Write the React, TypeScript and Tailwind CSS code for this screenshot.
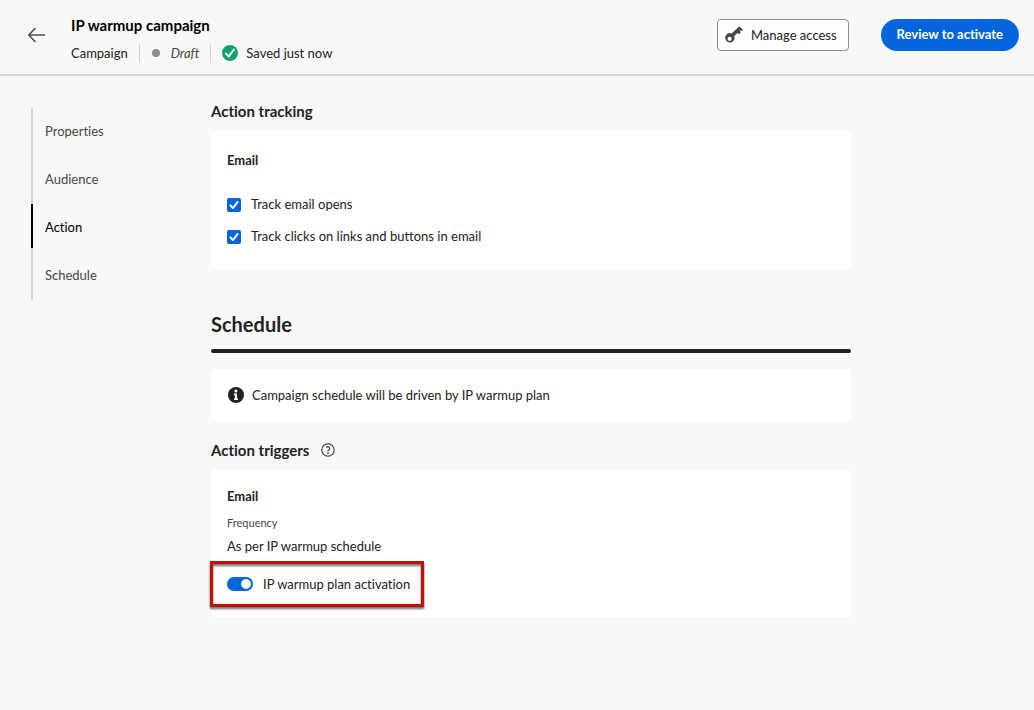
import { useState, type ReactNode } from 'react';

const steps = ['Properties', 'Audience', 'Action', 'Schedule'];

function BackIcon() {
  return (
    <svg viewBox="0 0 18 16" className="h-4 w-[18px]" fill="none" stroke="#4b4b4b" strokeWidth="1.5" strokeLinecap="round" strokeLinejoin="round" aria-hidden="true">
      <path d="M16.500 8H.9M7 1.600L.8 8 7 14.400" />
    </svg>
  );
}

function KeyIcon() {
  return (
    <svg viewBox="0 0 18 18" className="size-[18px]" aria-hidden="true">
      <path
        fill="#464646"
        fillRule="evenodd"
        d="M13.600 .9a1 1 0 0 1 1.400 0l2.600 2.600a.8.8 0 0 1 0 1.100l-.6.6-1.200-1.100-1 1 1.100 1.100-1.500 1.500a.8.8 0 0 1-1.100 0l-.9-.8-3.200 3.100a4.700 4.700 0 1 1-2.600-2.600zM4.600 10.700a2.100 2.100 0 1 0 0 4.200 2.100 2.100 0 0 0 0-4.200z"
      />
    </svg>
  );
}

function SavedIcon() {
  return (
    <svg viewBox="0 0 16 16" className="size-4" aria-hidden="true">
      <circle cx="8" cy="8" r="8" fill="#12a26c" />
      <path d="M3.8 8.4l2.9 3.1 5.3-7" fill="none" stroke="#fff" strokeWidth="1.9" strokeLinecap="round" strokeLinejoin="round" />
    </svg>
  );
}

function InfoIcon() {
  return (
    <svg viewBox="0 0 16 16" className="size-4" aria-hidden="true">
      <circle cx="8" cy="8" r="8" fill="#222" />
      <circle cx="7.9" cy="4" r="1.5" fill="#fff" />
      <path d="M6 6.6h3v4.6h1V13H6v-1.8h1V8.4H6z" fill="#fff" />
    </svg>
  );
}

function HelpIcon() {
  return (
    <svg viewBox="0 0 14 14" className="size-3.5" fill="none" stroke="#464646" aria-hidden="true">
      <circle cx="7" cy="7" r="6.2" strokeWidth="1.2" />
      <path d="M5.2 4.3c1.7-1 3.6-.5 3.6 1 0 1.300-1.800 1.500-1.800 2.900" strokeWidth="1.3" />
      <circle cx="7" cy="10.200" r=".9" fill="#464646" stroke="none" />
    </svg>
  );
}

function Card({ children, className }: { children: ReactNode; className: string }) {
  return <div className={`rounded bg-white px-4 ${className}`}>{children}</div>;
}

function TrackOption({ id, label }: { id: string; label: string }) {
  const [checked, setChecked] = useState(true);
  return (
    <div className="flex h-8 items-center gap-2.5">
      <span className="relative flex size-3.5">
        <input
          id={id}
          type="checkbox"
          checked={checked}
          onChange={(e) => setChecked(e.target.checked)}
          className="size-3.5 appearance-none rounded-xs border-2 border-[#6e6e6e] bg-white checked:border-[#0265dc] checked:bg-[#0265dc]"
        />
        {checked && (
          <svg viewBox="0 0 14 14" className="pointer-events-none absolute inset-0 size-3.5" aria-hidden="true">
            <path d="M3.400 7.400l2.500 2.700 4.600-6" fill="none" stroke="#fff" strokeWidth="1.900" strokeLinecap="round" strokeLinejoin="round" />
          </svg>
        )}
      </span>
      <label htmlFor={id} className="pb-0.5">{label}</label>
    </div>
  );
}

export default function App() {
  const [active, setActive] = useState('Action');
  const [activated, setActivated] = useState(true);

  return (
    <div className="min-h-screen bg-[#f8f8f8] font-['Lato','Noto_Sans',sans-serif] text-[13px] leading-5 text-[#222] [font-variant-ligatures:none]">
      <header className="flex items-start justify-between border-b-2 border-[#d5d5d5] pr-[15px] pb-2.5 pl-7">
        <div className="flex items-start gap-[25px]">
          <button type="button" aria-label="Back" className="mt-[27px]">
            <BackIcon />
          </button>
          <div className="pt-[15px]">
            <h1 className="text-[15px] leading-5 font-bold text-black">IP warmup campaign</h1>
            <div className="mt-2 mb-px flex h-5 items-center">
              <span>Campaign</span>
              <span className="mx-[11px] h-[18px] w-px bg-[#d0d0d0]" />
              <span className="mr-[11px] ml-px size-2 rounded-full bg-[#8e8e8e]" />
              <span className="text-[#464646] italic">Draft</span>
              <span className="mx-[11px] h-[18px] w-px bg-[#d0d0d0]" />
              <SavedIcon />
              <span className="ml-2">Saved just now</span>
            </div>
          </div>
        </div>
        <div className="flex items-center gap-8 pt-[19px]">
          <button type="button" className="flex h-8 items-center gap-2 rounded border border-[#8e8e8e] bg-[#fdfdfd] pr-[11px] pl-[7px]">
            <KeyIcon />
            Manage access
          </button>
          <button type="button" className="h-8 rounded-full bg-[#0265dc] px-4 pb-0.5 font-bold text-white">
            Review to activate
          </button>
        </div>
      </header>

      <div className="flex items-start">
        <nav aria-label="Campaign steps" className="ml-[31px] w-[180px] shrink-0 pt-8">
          <ul className="w-40 border-l-2 border-[#d5d5d5]">
            {steps.map((step) => (
              <li key={step} className="h-12">
                <a
                  href={`#${step.toLowerCase()}`}
                  onClick={() => setActive(step)}
                  aria-current={active === step ? 'step' : undefined}
                  className={`-ml-0.5 flex h-11 items-center border-l-2 pt-0.5 pl-3 ${
                    active === step ? 'border-black text-black' : 'border-transparent text-[#464646]'
                  }`}
                >
                  {step}
                </a>
              </li>
            ))}
          </ul>
        </nav>

        <main className="mr-8 max-w-[640px] flex-1 pt-[25px] pb-12">
          <h2 className="text-[15px] leading-5 font-bold" id="action">Action tracking</h2>
          <Card className="mt-2.5 pt-[19px] pb-4">
            <h3 className="mb-[19px] text-[13px] leading-5 font-bold">Email</h3>
            <TrackOption id="track-opens" label="Track email opens" />
            <TrackOption id="track-clicks" label="Track clicks on links and buttons in email" />
          </Card>

          <h2 className="mt-[43px] text-xl leading-6 font-bold" id="schedule">Schedule</h2>
          <hr className="mt-[13px] h-1 rounded-full border-0 bg-[#222]" />
          <Card className="mt-4 flex items-center gap-2 pt-4 pb-[17px]">
            <span className="ml-px"><InfoIcon /></span>
            <p>Campaign schedule will be driven by IP warmup plan</p>
          </Card>

          <div className="mt-[18px] flex items-center gap-3">
            <h2 className="text-[15px] leading-5 font-bold">Action triggers</h2>
            <button type="button" aria-label="About action triggers">
              <HelpIcon />
            </button>
          </div>
          <Card className="mt-2.5 pt-4 pb-[23px]">
            <h3 className="text-[13px] leading-5 font-bold">Email</h3>
            <p className="mt-[9px] text-[11px] leading-4 text-[#464646]">Frequency</p>
            <p className="mt-[5px]">As per IP warmup schedule</p>
            <div className="relative mt-[18px] flex w-fit items-center gap-2.5">
              <button
                type="button"
                role="switch"
                aria-checked={activated}
                aria-labelledby="activation-label"
                onClick={() => setActivated(!activated)}
                className={`flex h-3.5 w-[26px] items-center rounded-full px-px ${
                  activated ? 'justify-end bg-[#0265dc]' : 'justify-start bg-[#8e8e8e]'
                }`}
              >
                <span className="size-3 rounded-full border border-[#0265dc]/30 bg-white bg-clip-padding" />
              </button>
              <span id="activation-label">IP warmup plan activation</span>
              <span className="pointer-events-none absolute -inset-y-[13px] -right-3.5 -left-[17px] border-3 border-[#c11103] drop-shadow-[0_2px_1px_rgba(0,0,0,0.6)]" />
            </div>
          </Card>
        </main>
      </div>
    </div>
  );
}
